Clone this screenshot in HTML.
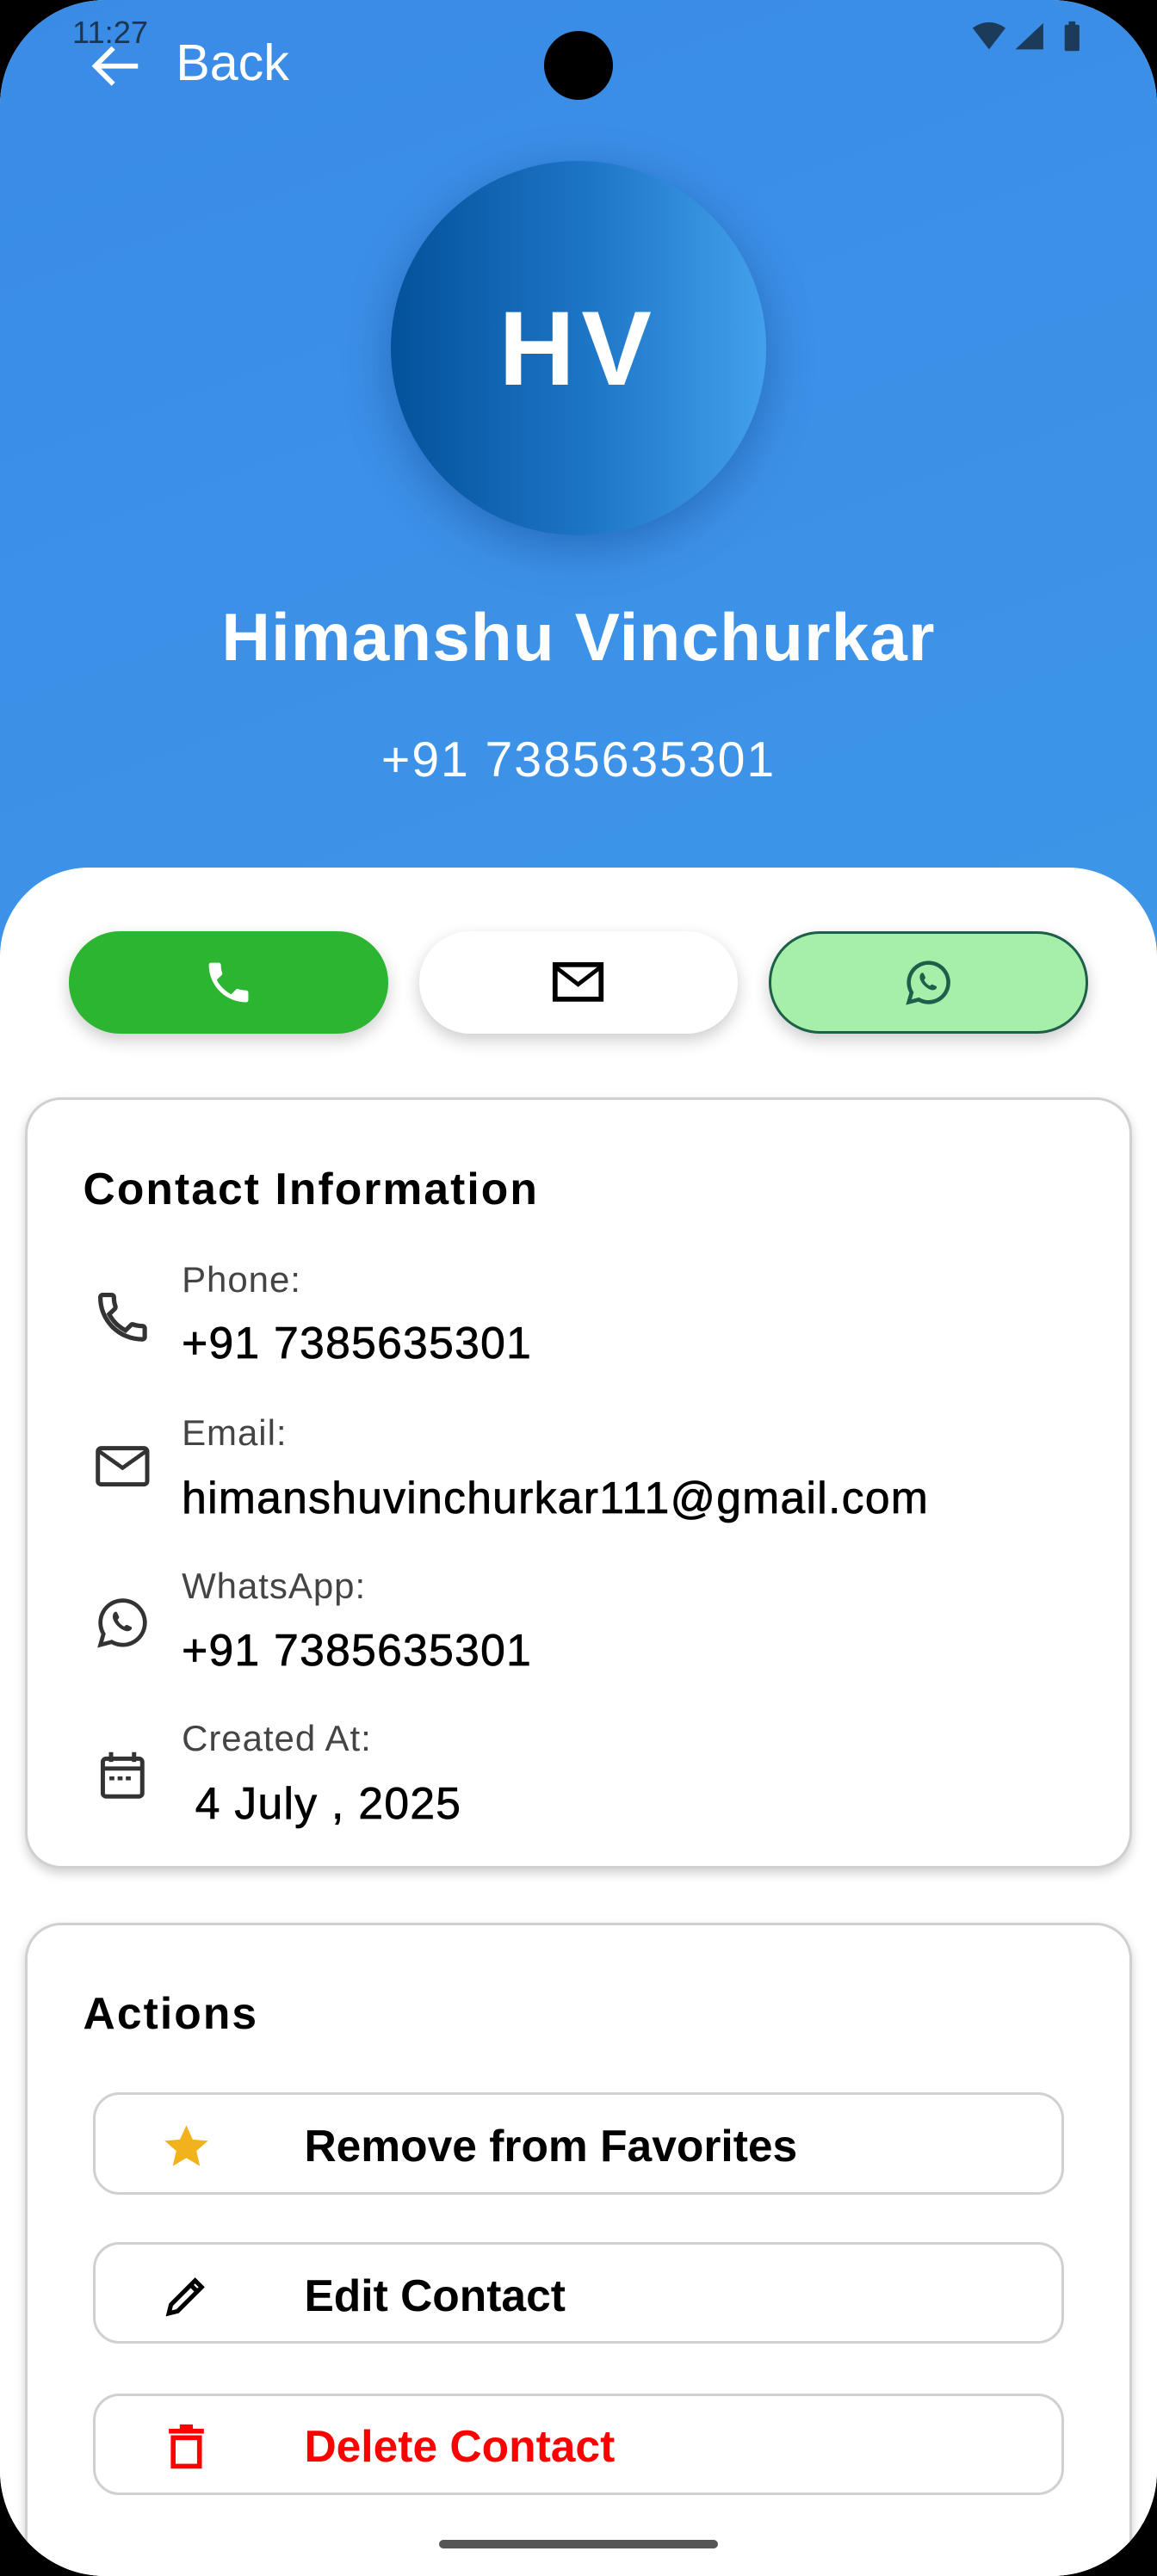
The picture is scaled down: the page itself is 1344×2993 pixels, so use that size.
<!DOCTYPE html>
<html><head><meta charset="utf-8"><style>
html,body{margin:0;padding:0;background:#000;}
body{width:1344px;height:2992px;overflow:hidden;}
#s{zoom:1.9091;width:704px;height:1568px;position:relative;overflow:hidden;border-radius:64px;background:#fff;font-family:"Liberation Sans",sans-serif;}
.hdr{position:absolute;left:0;top:0;width:704px;height:600px;background:linear-gradient(160deg,#3a8be6,#3d96e8);}
.sheet{position:absolute;left:0;top:528px;width:704px;height:1100px;background:#fff;border-radius:54px 54px 0 0;}
.abs{position:absolute;}
.av{left:238px;top:98px;width:228px;height:228px;border-radius:50%;background:linear-gradient(90deg,#03519a,#1f77c8 55%,#43a0ec);box-shadow:0 8px 28px rgba(0,40,110,.35);color:#fff;font-size:64px;font-weight:bold;text-align:center;line-height:228px;letter-spacing:4px;}
.btn{top:567px;width:194px;height:62px;border-radius:31px;box-shadow:0 4px 10px rgba(0,0,0,.2);display:flex;align-items:center;justify-content:center;box-sizing:border-box;}
.card{left:15px;width:674px;border:2px solid #d0d0d0;border-radius:22px;background:#fff;box-shadow:0 3px 6px rgba(0,0,0,.18);box-sizing:border-box;}
.h{position:absolute;left:34px;font-size:27px;font-weight:bold;color:#000;letter-spacing:1.1px;}
.lbl{position:absolute;left:94px;font-size:22px;color:#444;letter-spacing:.5px;}
.val{position:absolute;left:94px;font-size:27px;color:#000;letter-spacing:.7px;-webkit-text-stroke:.4px #000;}
.ic{position:absolute;left:40px;}
.ab{position:absolute;left:40px;width:591px;height:62px;border:2px solid #d0d0d0;border-radius:16px;box-sizing:border-box;}
.ab span{position:absolute;left:127px;top:15px;font-size:27px;font-weight:bold;letter-spacing:0;}
.ab svg{position:absolute;left:38px;top:15px;}
</style></head><body><div id="s">
<div class="hdr"></div>
<div class="abs" style="left:44px;top:9px;font-size:19px;color:#1c3550;">11:27</div>
<svg class="abs" style="left:54px;top:26px" width="32" height="28" viewBox="0 0 32 28"><path d="M30 14H5M15 3L4 14l11 11" stroke="#fff" stroke-width="3" fill="none"/></svg>
<div class="abs" style="left:107px;top:20px;font-size:31px;color:#fff;">Back</div>
<div class="abs" style="left:331px;top:19px;width:42px;height:42px;border-radius:50%;background:#000;"></div>
<svg class="abs" style="left:590px;top:12px" width="72" height="20" viewBox="0 0 72 20"><path d="M2 5Q12-2 22 5L12 18Z" fill="#1c3a5a"/><path d="M28 18L45 2V18Z" fill="#1c3a5a"/><rect x="58" y="3" width="9" height="16" rx="1" fill="#1c3a5a"/><rect x="60.5" y="1" width="4" height="3" fill="#1c3a5a"/></svg>
<div class="abs av">HV</div>
<div class="abs" style="left:0;width:704px;top:364px;text-align:center;font-size:41px;font-weight:bold;color:#fff;letter-spacing:.6px;">Himanshu Vinchurkar</div>
<div class="abs" style="left:0;width:704px;top:445px;text-align:center;font-size:30px;color:#fff;letter-spacing:1px;">+91 7385635301</div>
<div class="sheet"></div>
<div class="abs btn" style="left:42px;background:#2bb531;"><svg width="32" height="32" viewBox="0 0 24 24"><path d="M6.6 10.8c1.4 2.8 3.8 5.1 6.6 6.6l2.2-2.2c.3-.3.7-.4 1-.2 1.1.4 2.3.6 3.6.6.6 0 1 .4 1 1V20c0 .6-.4 1-1 1C10.6 21 3 13.4 3 4c0-.6.4-1 1-1h3.5c.6 0 1 .4 1 1 0 1.3.2 2.5.6 3.6.1.3 0 .7-.2 1z" fill="#fff"/></svg></div>
<div class="abs btn" style="left:255px;background:#fff;"><svg width="32" height="26" viewBox="0 0 32 26"><rect x="2" y="2" width="28" height="21" fill="none" stroke="#000" stroke-width="3"/><path d="M3 4l13 10L29 4" fill="none" stroke="#000" stroke-width="2.5"/></svg></div>
<div class="abs btn" style="left:468px;background:#a6efa8;border:2px solid #1d5f4a;"><svg width="32" height="32" viewBox="0 0 32 32"><path d="M16 4a12 12 0 0 0-10.3 18.1L4 28l6.1-1.6A12 12 0 1 0 16 4z" fill="none" stroke="#1d5f4a" stroke-width="2.4"/><path d="M11.5 10.5c.6-.6 1.3-.5 1.6.1l1 2.2c.2.5-.4 1.2-.8 1.6.8 1.7 2 2.9 3.6 3.7.4-.4 1-1.1 1.5-.9l2.2 1c.6.3.6 1-.1 1.7-1 1-2.8 1-5-.4-2.5-1.6-4-3.7-4.6-5.5-.4-1.3-.2-2.7.6-3.5z" fill="#1d5f4a"/></svg></div>

<div class="abs card" style="top:668px;height:469px;">
<div class="h" style="top:38px;">Contact Information</div>
<svg class="ic" style="top:114px" width="36" height="36" viewBox="0 0 24 24"><path d="M6.6 10.8c1.4 2.8 3.8 5.1 6.6 6.6l2.2-2.2c.3-.3.7-.4 1-.2 1.1.4 2.3.6 3.6.6.6 0 1 .4 1 1V20c0 .6-.4 1-1 1C10.6 21 3 13.4 3 4c0-.6.4-1 1-1h3.5c.6 0 1 .4 1 1 0 1.3.2 2.5.6 3.6.1.3 0 .7-.2 1z" fill="none" stroke="#333" stroke-width="1.8"/></svg>
<div class="lbl" style="top:97px;">Phone:</div>
<div class="val" style="top:132px;">+91 7385635301</div>
<svg class="ic" style="top:208px" width="36" height="30" viewBox="0 0 36 30"><rect x="3" y="4" width="30" height="22" rx="2" fill="none" stroke="#333" stroke-width="2.6"/><path d="M4 6l14 10L32 6" fill="none" stroke="#333" stroke-width="2.4"/></svg>
<div class="lbl" style="top:190px;">Email:</div>
<div class="val" style="top:226px;">himanshuvinchurkar111@gmail.com</div>
<svg class="ic" style="top:300px" width="36" height="36" viewBox="0 0 32 32"><path d="M16 4a12 12 0 0 0-10.3 18.1L4 28l6.1-1.6A12 12 0 1 0 16 4z" fill="none" stroke="#333" stroke-width="2.2"/><path d="M11.5 10.5c.6-.6 1.3-.5 1.6.1l1 2.2c.2.5-.4 1.2-.8 1.6.8 1.7 2 2.9 3.6 3.7.4-.4 1-1.1 1.5-.9l2.2 1c.6.3.6 1-.1 1.7-1 1-2.8 1-5-.4-2.5-1.6-4-3.7-4.6-5.5-.4-1.3-.2-2.7.6-3.5z" fill="#333"/></svg>
<div class="lbl" style="top:283px;">WhatsApp:</div>
<div class="val" style="top:319px;">+91 7385635301</div>
<svg class="ic" style="top:394px" width="36" height="36" viewBox="0 0 36 36"><rect x="6" y="7" width="24" height="23" rx="2" fill="none" stroke="#333" stroke-width="2.6"/><path d="M6 13H30M11 3v6M25 3v6" stroke="#333" stroke-width="2.6"/><path d="M10 19h3M15 19h3M20 19h3" stroke="#333" stroke-width="2.4"/></svg>
<div class="lbl" style="top:376px;">Created At:</div>
<div class="val" style="top:412px;">&nbsp;4 July , 2025</div>
</div>

<div class="abs card" style="top:1170px;height:460px;">
<div class="h" style="top:38px;">Actions</div>
<div class="ab" style="top:102px;"><svg width="34" height="32" viewBox="0 0 24 24"><path d="M12 2.5l2.9 6.5 7 .6-5.3 4.6 1.6 6.9L12 17.4l-6.2 3.7 1.6-6.9L2.1 9.6l7-.6z" fill="#f2b21c"/></svg><span style="color:#000;">Remove from Favorites</span></div>
<div class="ab" style="top:193px;"><svg width="34" height="32" viewBox="0 0 24 24"><path d="M4 20l1-4L16 5l3 3L8 19z" fill="none" stroke="#000" stroke-width="2"/><path d="M14 7l3 3" stroke="#000" stroke-width="2"/></svg><span style="color:#000;">Edit Contact</span></div>
<div class="ab" style="top:285px;"><svg width="34" height="32" viewBox="0 0 24 24"><path d="M6 8h12v13H6z" fill="none" stroke="#f00" stroke-width="2.2"/><path d="M4 5h16M9 3h6" stroke="#f00" stroke-width="2.2"/></svg><span style="color:#f00;">Delete Contact</span></div>
</div>
<div class="abs" style="left:267px;top:1546px;width:170px;height:5px;border-radius:3px;background:#555;"></div>
</div></body></html>
